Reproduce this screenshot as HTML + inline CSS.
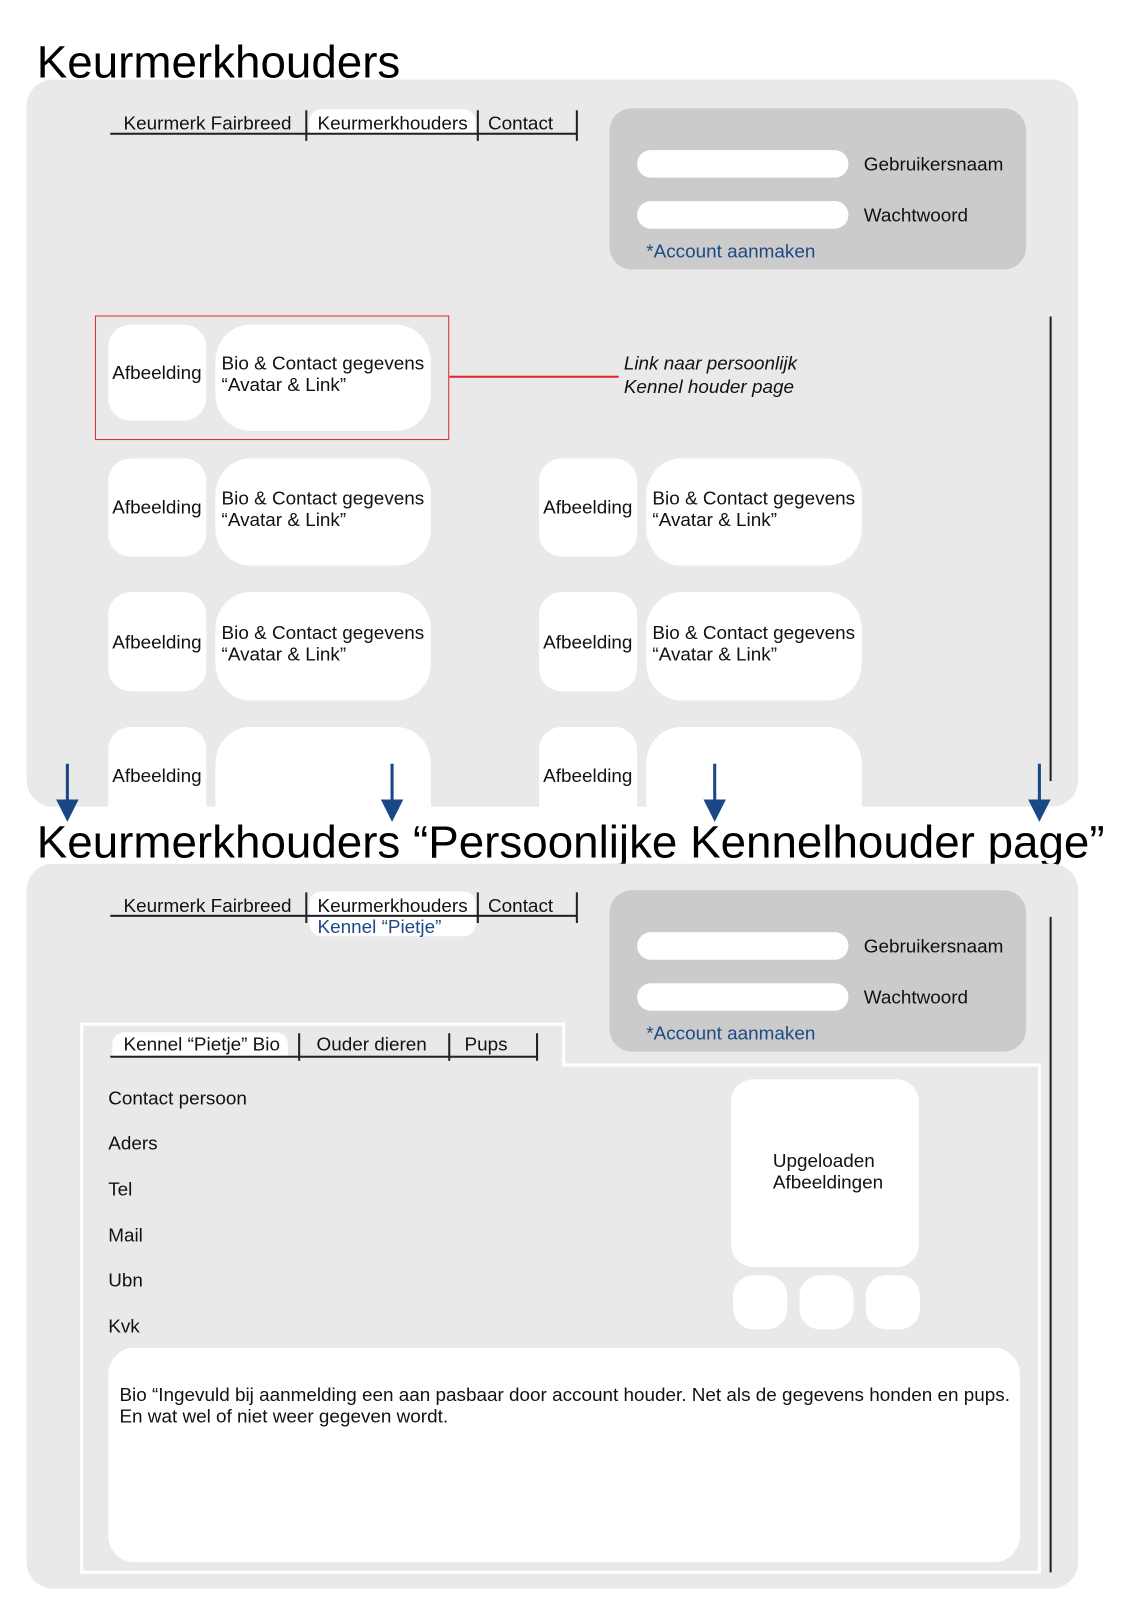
<!DOCTYPE html>
<html><head><meta charset="utf-8"><style>
html,body{margin:0;padding:0;background:#fff;width:1131px;height:1600px;overflow:hidden}
#w{position:absolute;left:0;top:0;width:1100px;height:1570px;transform:scale(1.021);transform-origin:0 0;font-family:"Liberation Sans",Arial,sans-serif;color:#111}
.a{position:absolute}
.t{position:absolute;white-space:nowrap;font-size:18.5px;line-height:21px}
.h{position:absolute;font-size:44.8px;line-height:50px;white-space:nowrap;color:#000}
.panel{position:absolute;background:#e9e9e9;border-radius:26px;overflow:hidden}
.wb{position:absolute;background:#fff}
.bl{color:#1d4a86}
.v{position:absolute;width:2px;background:#222}
.hl{position:absolute;height:2px;background:#222}
</style></head><body><div id="w">

<div class="h" style="left:36px;top:36px">Keurmerkhouders</div>

<div class="a" style="left:26px;top:78px;width:1030px;height:712px;overflow:hidden;border-radius:26px;background:#e9e9e9">
  <div style="position:absolute;left:-26px;top:-78px;width:1100px;height:900px">
    <div class="wb" style="left:303px;top:107px;width:163px;height:25px;border-radius:12px 12px 0 0"></div>
    <div class="hl" style="left:108px;top:130px;width:457px"></div>
    <div class="v" style="left:299px;top:108px;height:30px"></div>
    <div class="v" style="left:467px;top:108px;height:30px"></div>
    <div class="v" style="left:564px;top:108px;height:30px"></div>
    <div class="t" style="left:121px;top:110px">Keurmerk Fairbreed</div>
    <div class="t" style="left:311px;top:110px">Keurmerkhouders</div>
    <div class="t" style="left:478px;top:110px">Contact</div>

    <div class="a" style="left:597px;top:106px;width:408px;height:158px;background:#cbcbcb;border-radius:22px"></div>
    <div class="wb" style="left:624px;top:147px;width:207px;height:27px;border-radius:14px"></div>
    <div class="wb" style="left:624px;top:197px;width:207px;height:27px;border-radius:14px"></div>
    <div class="t" style="left:846px;top:150px">Gebruikersnaam</div>
    <div class="t" style="left:846px;top:200px">Wachtwoord</div>
    <div class="t bl" style="left:633px;top:235px">*Account aanmaken</div>

    <div class="v" style="left:1028px;top:310px;height:455px"></div>

    <div class="a" style="left:93px;top:309px;width:345px;height:120px;border:1.5px solid #e0282b"></div>
    <div class="a" style="left:440px;top:368px;width:166px;height:1.5px;background:#e0282b"></div>
    <div class="t" style="left:611px;top:345px;font-style:italic">Link naar persoonlijk</div>
    <div class="t" style="left:611px;top:368px;font-style:italic">Kennel houder page</div>

    <div class="wb" style="left:106px;top:318px;width:96px;height:94px;border-radius:22px"></div>
    <div class="wb" style="left:211px;top:318px;width:211px;height:104px;border-radius:34px/36px"></div>
    <div class="t" style="left:110px;top:354px">Afbeelding</div>
    <div class="t" style="left:217px;top:345px">Bio &amp; Contact gegevens<br>“Avatar &amp; Link”</div>

    <div class="wb" style="left:106px;top:449px;width:96px;height:96px;border-radius:22px"></div>
    <div class="wb" style="left:211px;top:449px;width:211px;height:105px;border-radius:34px/36px"></div>
    <div class="t" style="left:110px;top:486px">Afbeelding</div>
    <div class="t" style="left:217px;top:477px">Bio &amp; Contact gegevens<br>“Avatar &amp; Link”</div>
    <div class="wb" style="left:528px;top:449px;width:96px;height:96px;border-radius:22px"></div>
    <div class="wb" style="left:633px;top:449px;width:211px;height:105px;border-radius:34px/36px"></div>
    <div class="t" style="left:532px;top:486px">Afbeelding</div>
    <div class="t" style="left:639px;top:477px">Bio &amp; Contact gegevens<br>“Avatar &amp; Link”</div>

    <div class="wb" style="left:106px;top:580px;width:96px;height:97px;border-radius:22px"></div>
    <div class="wb" style="left:211px;top:580px;width:211px;height:106px;border-radius:34px/36px"></div>
    <div class="t" style="left:110px;top:618px">Afbeelding</div>
    <div class="t" style="left:217px;top:609px">Bio &amp; Contact gegevens<br>“Avatar &amp; Link”</div>
    <div class="wb" style="left:528px;top:580px;width:96px;height:97px;border-radius:22px"></div>
    <div class="wb" style="left:633px;top:580px;width:211px;height:106px;border-radius:34px/36px"></div>
    <div class="t" style="left:532px;top:618px">Afbeelding</div>
    <div class="t" style="left:639px;top:609px">Bio &amp; Contact gegevens<br>“Avatar &amp; Link”</div>

    <div class="wb" style="left:106px;top:712px;width:96px;height:120px;border-radius:22px"></div>
    <div class="wb" style="left:211px;top:712px;width:211px;height:120px;border-radius:34px/36px"></div>
    <div class="t" style="left:110px;top:749px">Afbeelding</div>
    <div class="wb" style="left:528px;top:712px;width:96px;height:120px;border-radius:22px"></div>
    <div class="wb" style="left:633px;top:712px;width:211px;height:120px;border-radius:34px/36px"></div>
    <div class="t" style="left:532px;top:749px">Afbeelding</div>
  </div>
</div>

<svg class="a" style="left:0;top:0" width="1100" height="820">
  <g fill="#1a4886" stroke="#1a4886">
    <line x1="66" y1="748" x2="66" y2="788" stroke-width="3"/><polygon points="55,783 77,783 66,805" stroke="none"/>
    <line x1="384" y1="748" x2="384" y2="788" stroke-width="3"/><polygon points="373,783 395,783 384,805" stroke="none"/>
    <line x1="700" y1="748" x2="700" y2="788" stroke-width="3"/><polygon points="689,783 711,783 700,805" stroke="none"/>
    <line x1="1018" y1="748" x2="1018" y2="788" stroke-width="3"/><polygon points="1007,783 1029,783 1018,805" stroke="none"/>
  </g>
</svg>

<div class="h" style="left:36px;top:800px">Keurmerkhouders “Persoonlijke Kennelhouder page”</div>

<div class="panel" style="left:26px;top:846px;width:1030px;height:710px"></div>

<div class="wb" style="left:303px;top:873px;width:163px;height:44px;border-radius:12px"></div>
<div class="hl" style="left:108px;top:896px;width:457px"></div>
<div class="v" style="left:299px;top:874px;height:30px"></div>
<div class="v" style="left:467px;top:874px;height:30px"></div>
<div class="v" style="left:564px;top:874px;height:30px"></div>
<div class="t" style="left:121px;top:876px">Keurmerk Fairbreed</div>
<div class="t" style="left:311px;top:876px">Keurmerkhouders</div>
<div class="t" style="left:478px;top:876px">Contact</div>
<div class="t bl" style="left:311px;top:897px">Kennel “Pietje”</div>

<div class="a" style="left:597px;top:872px;width:408px;height:158px;background:#cbcbcb;border-radius:22px"></div>
<div class="wb" style="left:624px;top:913px;width:207px;height:27px;border-radius:14px"></div>
<div class="wb" style="left:624px;top:963px;width:207px;height:27px;border-radius:14px"></div>
<div class="t" style="left:846px;top:916px">Gebruikersnaam</div>
<div class="t" style="left:846px;top:966px">Wachtwoord</div>
<div class="t bl" style="left:633px;top:1001px">*Account aanmaken</div>

<div class="v" style="left:1028px;top:898px;height:642px"></div>

<svg class="a" style="left:0;top:0" width="1100" height="1556">
  <path d="M80,1540 L80,1003 L552,1003 L552,1043 L1018,1043 L1018,1540 Z" fill="#e9e9e9" stroke="#fff" stroke-width="3"/>
</svg>

<div class="wb" style="left:110px;top:1011px;width:172px;height:25px;border-radius:12px 12px 0 0"></div>
<div class="hl" style="left:108px;top:1034px;width:419px"></div>
<div class="v" style="left:292px;top:1012px;height:27px"></div>
<div class="v" style="left:439px;top:1012px;height:27px"></div>
<div class="v" style="left:525px;top:1012px;height:27px"></div>
<div class="t" style="left:121px;top:1012px">Kennel “Pietje” Bio</div>
<div class="t" style="left:310px;top:1012px">Ouder dieren</div>
<div class="t" style="left:455px;top:1012px">Pups</div>

<div class="t" style="left:106px;top:1065px">Contact persoon</div>
<div class="t" style="left:106px;top:1109px">Aders</div>
<div class="t" style="left:106px;top:1154px">Tel</div>
<div class="t" style="left:106px;top:1199px">Mail</div>
<div class="t" style="left:106px;top:1243px">Ubn</div>
<div class="t" style="left:106px;top:1288px">Kvk</div>

<div class="wb" style="left:716px;top:1057px;width:184px;height:184px;border-radius:22px"></div>
<div class="t" style="left:757px;top:1126px">Upgeloaden<br>Afbeeldingen</div>
<div class="wb" style="left:718px;top:1249px;width:53px;height:53px;border-radius:20px"></div>
<div class="wb" style="left:783px;top:1249px;width:53px;height:53px;border-radius:20px"></div>
<div class="wb" style="left:848px;top:1249px;width:53px;height:53px;border-radius:20px"></div>

<div class="wb" style="left:106px;top:1320px;width:893px;height:210px;border-radius:26px"></div>
<div class="t" style="left:117px;top:1355px">Bio “Ingevuld bij aanmelding een aan pasbaar door account houder. Net als de gegevens honden en pups.<br>En wat wel of niet weer gegeven wordt.</div>

</div></body></html>
